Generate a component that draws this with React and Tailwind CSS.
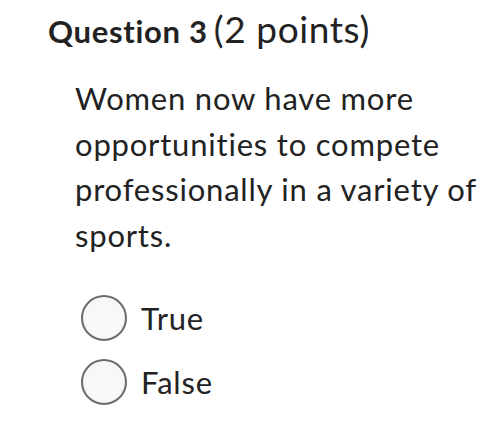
import React, { useState } from 'react';

const OPTIONS = ['True', 'False'];

export default function App() {
  const [picked, setPicked] = useState(null);

  return (
    <div className="w-[493px] h-[444px] bg-white text-[#222222] overflow-hidden [font-variant-ligatures:none]" style={{ fontFamily: 'Lato, "Open Sans", sans-serif' }}>
      <div className="pl-[48px] pt-[7px]">
        <h2 className="leading-[44px] flex items-baseline whitespace-nowrap">
          <span className="font-bold text-[31px] tracking-[0.7px]">Question 3</span>
          <span className="font-normal text-[37px] tracking-[0.6px] ml-[6px]">(2 points)</span>
        </h2>
      </div>

      <p className="pl-[75px] pt-[23px] text-[31px] tracking-[0.8px] leading-[45.5px]">
        Women now have more opportunities to compete professionally in a variety of sports.
      </p>

      <div className="pl-[81px] pt-[37px] flex flex-col gap-[18px]">
        {OPTIONS.map((opt) => (
          <label key={opt} className="flex items-center gap-[14px] cursor-pointer" onClick={() => setPicked(opt)}>
            <span className="w-[46px] h-[46px] rounded-full border-2 border-[#6b6b6b] bg-[#f7f8fa] flex items-center justify-center shrink-0">
              {picked === opt && <span className="w-[22px] h-[22px] rounded-full bg-[#333]" />}
            </span>
            <span className="text-[31px] tracking-[0.8px] leading-[46px]">{opt}</span>
          </label>
        ))}
      </div>
    </div>
  );
}
